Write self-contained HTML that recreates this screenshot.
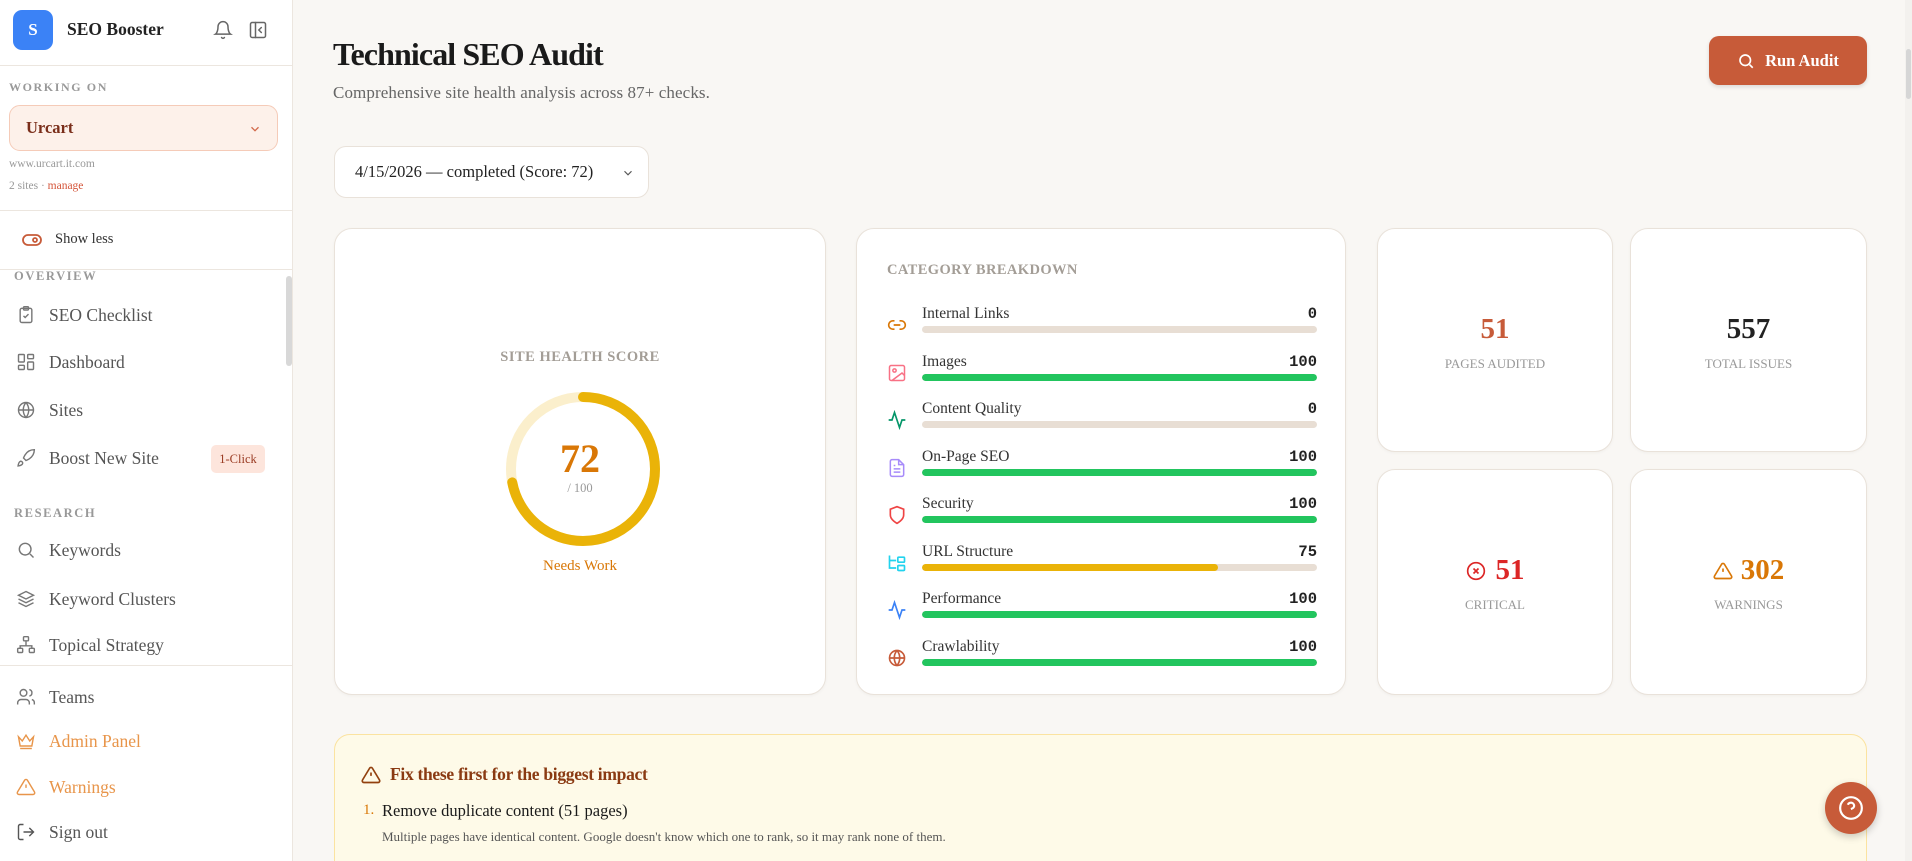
<!DOCTYPE html>
<html style="overflow:hidden;width:1912px;height:861px"><head><meta charset="utf-8">
<style>
*{box-sizing:border-box;margin:0;padding:0}
body{width:1912px;height:861px;overflow:hidden;background:#f9f7f4;font-family:"Liberation Serif",serif;position:relative;color:#222}
.a{position:absolute}
.side{left:0;top:0;width:293px;height:861px;background:#fff;border-right:1px solid #ece6df}
.hr{position:absolute;left:0;width:292px;height:1px;background:#ece6df}
.nav{position:absolute;left:0;width:292px;height:30px;display:flex;align-items:center;font-size:17.5px;color:#555}
.nav svg{position:absolute;left:16px;width:20px;height:20px}
.nav span{position:absolute;left:49px}
.sec{position:absolute;left:14px;font-size:12.5px;letter-spacing:1.6px;color:#999;font-weight:bold}
.card{position:absolute;background:#fff;border:1px solid #e9e2da;border-radius:18px;box-shadow:0 1px 3px rgba(0,0,0,.04)}
.row{position:absolute;left:30px;width:430px;height:40px}
.row .ic{position:absolute;left:0;top:8px;width:20px;height:20px}
.row .lb{position:absolute;left:35px;top:-2px;font-size:15.5px;color:#333}
.row .v{position:absolute;right:0;top:-2px;font-family:"Liberation Mono",monospace;font-size:15.5px;color:#222;font-weight:bold}
.row .bar{position:absolute;left:35px;top:19px;width:395px;height:7px;border-radius:4px;background:#e8ded4;overflow:hidden}
.row .bar i{display:block;height:100%;background:#22c55e;border-radius:4px}
.stat{text-align:center}
.stat .n{position:absolute;left:0;right:0;font-size:29px;font-weight:bold}
.stat .l{position:absolute;left:0;right:0;font-size:13px;color:#999}
</style></head><body>
<div class="a side">
  <div class="a" style="left:13px;top:10px;width:40px;height:40px;background:#3b82f6;border-radius:9px;color:#fff;font-weight:bold;font-size:17px;display:flex;align-items:center;justify-content:center">S</div>
  <div class="a" style="left:67px;top:19px;font-size:17.5px;font-weight:bold;color:#222">SEO Booster</div>
  <svg class="a" style="left:213px;top:20px" width="20" height="20" viewBox="0 0 24 24" fill="none" stroke="#666" stroke-width="1.8" stroke-linecap="round"><path d="M6 8a6 6 0 0 1 12 0c0 7 3 9 3 9H3s3-2 3-9"/><path d="M10.3 21a1.94 1.94 0 0 0 3.4 0"/></svg>
  <svg class="a" style="left:248px;top:20px" width="20" height="20" viewBox="0 0 24 24" fill="none" stroke="#666" stroke-width="1.8" stroke-linecap="round"><rect x="3" y="3" width="18" height="18" rx="2"/><path d="M9 3v18"/><path d="M16 15l-3-3 3-3"/></svg>
  <div class="hr" style="top:65px"></div>
  <div class="sec" style="left:9px;top:80px;font-size:12px">WORKING ON</div>
  <div class="a" style="left:9px;top:105px;width:269px;height:46px;background:#fdf1ea;border:1px solid #f5cbb8;border-radius:11px">
    <div class="a" style="left:16px;top:12px;font-size:16.5px;font-weight:bold;color:#7a2e1a">Urcart</div>
    <svg class="a" style="left:238px;top:16px" width="14" height="14" viewBox="0 0 24 24" fill="none" stroke="#d2694a" stroke-width="2.2"><path d="M6 9l6 6 6-6"/></svg>
  </div>
  <div class="a" style="left:9px;top:158px;font-size:11.5px;color:#999">www.urcart.it.com</div>
  <div class="a" style="left:9px;top:180px;font-size:11.5px;color:#999">2 sites · <span style="color:#d4553a">manage</span></div>
  <div class="hr" style="top:210px"></div>
  <svg class="a" style="left:22px;top:233px" width="20" height="14" viewBox="0 0 20 14" fill="none" stroke="#c75b39" stroke-width="1.8"><rect x="1" y="2" width="18" height="10" rx="5"/><circle cx="13" cy="7" r="2"/></svg>
  <div class="a" style="left:55px;top:231px;font-size:14.5px;color:#333">Show less</div>
  <div class="hr" style="top:269px"></div>
  <div class="sec" style="top:269px">OVERVIEW</div>
  <div class="a" style="left:286px;top:276px;width:6px;height:90px;background:#d8d8d8;border-radius:3px"></div>
  <div class="nav" style="top:300px"><svg viewBox="0 0 24 24" fill="none" stroke="#777" stroke-width="1.7"><rect x="5" y="4" width="14" height="17" rx="2"/><rect x="9" y="2" width="6" height="4" rx="1"/><path d="M9 13l2 2 4-4"/></svg><span>SEO Checklist</span></div>
  <div class="nav" style="top:347px"><svg viewBox="0 0 24 24" fill="none" stroke="#777" stroke-width="1.7"><rect x="3" y="3" width="7" height="9" rx="1"/><rect x="14" y="3" width="7" height="5" rx="1"/><rect x="14" y="12" width="7" height="9" rx="1"/><rect x="3" y="16" width="7" height="5" rx="1"/></svg><span>Dashboard</span></div>
  <div class="nav" style="top:395px"><svg viewBox="0 0 24 24" fill="none" stroke="#777" stroke-width="1.7"><circle cx="12" cy="12" r="9"/><path d="M3 12h18M12 3a14 14 0 0 1 0 18M12 3a14 14 0 0 0 0 18"/></svg><span>Sites</span></div>
  <div class="nav" style="top:443px"><svg viewBox="0 0 24 24" fill="none" stroke="#777" stroke-width="1.7"><path d="M4.5 16.5c-1.5 1.3-2 5-2 5s3.7-.5 5-2c.7-.8.7-2.1-.1-2.9a2.2 2.2 0 0 0-2.9-.1z"/><path d="M12 15l-3-3a22 22 0 0 1 2-3.9A12.9 12.9 0 0 1 22 2c0 2.7-.8 7.5-6 11a22.4 22.4 0 0 1-4 2z"/></svg><span>Boost New Site</span></div>
  <div class="a" style="left:211px;top:445px;width:54px;height:28px;background:#fde5dc;border-radius:5px;font-size:12.5px;color:#9a3b22;display:flex;align-items:center;justify-content:center">1-Click</div>
  <div class="sec" style="top:506px">RESEARCH</div>
  <div class="nav" style="top:535px"><svg viewBox="0 0 24 24" fill="none" stroke="#777" stroke-width="1.7"><circle cx="11" cy="11" r="7"/><path d="M21 21l-4.3-4.3"/></svg><span>Keywords</span></div>
  <div class="nav" style="top:584px"><svg viewBox="0 0 24 24" fill="none" stroke="#777" stroke-width="1.7"><path d="M12 3l9 4.5-9 4.5-9-4.5z"/><path d="M3 12l9 4.5 9-4.5M3 16.5l9 4.5 9-4.5"/></svg><span>Keyword Clusters</span></div>
  <div class="nav" style="top:630px"><svg viewBox="0 0 24 24" fill="none" stroke="#777" stroke-width="1.7"><rect x="9" y="2" width="6" height="5" rx="1"/><rect x="2" y="16" width="6" height="5" rx="1"/><rect x="16" y="16" width="6" height="5" rx="1"/><path d="M5 16v-3h14v3M12 7v6"/></svg><span>Topical Strategy</span></div>
  <div class="hr" style="top:665px"></div>
  <div class="nav" style="top:682px"><svg viewBox="0 0 24 24" fill="none" stroke="#777" stroke-width="1.7"><circle cx="9" cy="7" r="4"/><path d="M2 21v-2a4 4 0 0 1 4-4h6a4 4 0 0 1 4 4v2M16 3.1a4 4 0 0 1 0 7.8M22 21v-2a4 4 0 0 0-3-3.9"/></svg><span>Teams</span></div>
  <div class="nav" style="top:726px;color:#e8954a"><svg viewBox="0 0 24 24" fill="none" stroke="#e8954a" stroke-width="1.7"><path d="M3 7l4.5 5L12 5l4.5 7L21 7l-2 11H5z"/><path d="M5 21h14"/></svg><span>Admin Panel</span></div>
  <div class="nav" style="top:772px;color:#e8954a"><svg viewBox="0 0 24 24" fill="none" stroke="#e8954a" stroke-width="1.7"><path d="M10.3 3.9L1.8 18a2 2 0 0 0 1.7 3h17a2 2 0 0 0 1.7-3L13.7 3.9a2 2 0 0 0-3.4 0z"/><path d="M12 9v4M12 17h.01"/></svg><span>Warnings</span></div>
  <div class="nav" style="top:817px"><svg viewBox="0 0 24 24" fill="none" stroke="#555" stroke-width="1.7"><path d="M9 21H5a2 2 0 0 1-2-2V5a2 2 0 0 1 2-2h4M16 17l5-5-5-5M21 12H9"/></svg><span>Sign out</span></div>
</div>

<div class="a" style="left:333px;top:36px;font-size:32px;font-weight:bold;letter-spacing:-0.9px;color:#1a1a1a">Technical SEO Audit</div>
<div class="a" style="left:333px;top:83px;font-size:17px;color:#666;letter-spacing:0.1px">Comprehensive site health analysis across 87+ checks.</div>
<div class="a" style="left:1709px;top:36px;width:158px;height:49px;background:#c75b39;border-radius:10px;box-shadow:0 2px 4px rgba(0,0,0,.12);color:#fff;font-weight:bold;font-size:16.5px;display:flex;align-items:center;justify-content:center;gap:10px"><svg width="18" height="18" viewBox="0 0 24 24" fill="none" stroke="#fff" stroke-width="2.2"><circle cx="11" cy="11" r="7"/><path d="M21 21l-4.3-4.3"/></svg>Run Audit</div>
<div class="a" style="left:334px;top:146px;width:315px;height:52px;background:#fff;border:1px solid #e9e2da;border-radius:12px">
  <div class="a" style="left:20px;top:15px;font-size:16.5px;color:#222">4/15/2026 — completed (Score: 72)</div>
  <svg class="a" style="left:286px;top:19px" width="14" height="14" viewBox="0 0 24 24" fill="none" stroke="#555" stroke-width="2"><path d="M6 9l6 6 6-6"/></svg>
</div>

<div class="card" style="left:334px;top:228px;width:492px;height:467px">
  <div class="a" style="left:0;right:0;top:120px;text-align:center;font-size:14.5px;font-weight:bold;letter-spacing:.5px;color:#a39d96">SITE HEALTH SCORE</div>
  <svg class="a" style="left:168px;top:160px" width="160" height="160" viewBox="0 0 160 160"><circle cx="80" cy="80" r="72" fill="none" stroke="#fbefcc" stroke-width="10"/><circle cx="80" cy="80" r="72" fill="none" stroke="#eab308" stroke-width="10" stroke-linecap="round" stroke-dasharray="325.7 500" transform="rotate(-90 80 80)"/></svg>
  <div class="a" style="left:0;right:0;top:206px;text-align:center;font-size:40px;font-weight:bold;color:#d97706">72</div>
  <div class="a" style="left:0;right:0;top:252px;text-align:center;font-size:12.5px;color:#999">/ 100</div>
  <div class="a" style="left:0;right:0;top:329px;text-align:center;font-size:15px;color:#d97706">Needs Work</div>
</div>

<div class="card" style="left:856px;top:228px;width:490px;height:467px">
  <div class="a" style="left:30px;top:33px;font-size:14.5px;font-weight:bold;letter-spacing:.4px;color:#a39d96">CATEGORY BREAKDOWN</div>
  <div class="row" style="top:78px"><svg class="ic" viewBox="0 0 24 24" fill="none" stroke="#d97706" stroke-width="2"><path d="M9 17H7A5 5 0 0 1 7 7h2M15 7h2a5 5 0 1 1 0 10h-2M8 12h8"/></svg><div class="lb">Internal Links</div><div class="v">0</div><div class="bar"><i style="width:0"></i></div></div>
  <div class="row" style="top:126px"><svg class="ic" viewBox="0 0 24 24" fill="none" stroke="#f87185" stroke-width="1.8"><rect x="3" y="3" width="18" height="18" rx="2"/><circle cx="9" cy="9" r="2"/><path d="M21 15l-3-3L6 21"/></svg><div class="lb">Images</div><div class="v">100</div><div class="bar"><i style="width:100%"></i></div></div>
  <div class="row" style="top:173px"><svg class="ic" viewBox="0 0 24 24" fill="none" stroke="#059669" stroke-width="2"><path d="M22 12h-4l-3 9L9 3l-3 9H2"/></svg><div class="lb">Content Quality</div><div class="v">0</div><div class="bar"><i style="width:0"></i></div></div>
  <div class="row" style="top:221px"><svg class="ic" viewBox="0 0 24 24" fill="none" stroke="#a78bfa" stroke-width="1.8"><path d="M14 2H6a2 2 0 0 0-2 2v16a2 2 0 0 0 2 2h12a2 2 0 0 0 2-2V8z"/><path d="M14 2v6h6M16 13H8M16 17H8M10 9H8"/></svg><div class="lb">On-Page SEO</div><div class="v">100</div><div class="bar"><i style="width:100%"></i></div></div>
  <div class="row" style="top:268px"><svg class="ic" viewBox="0 0 24 24" fill="none" stroke="#ef4444" stroke-width="2"><path d="M12 22s8-4 8-10V5l-8-3-8 3v7c0 6 8 10 8 10z"/></svg><div class="lb">Security</div><div class="v">100</div><div class="bar"><i style="width:100%"></i></div></div>
  <div class="row" style="top:316px"><svg class="ic" viewBox="0 0 24 24" fill="none" stroke="#22d3ee" stroke-width="2"><path d="M3 3v15h8M3 9h8"/><rect x="13" y="5" width="8" height="6" rx="1"/><rect x="13" y="15" width="8" height="6" rx="1"/></svg><div class="lb">URL Structure</div><div class="v">75</div><div class="bar"><i style="width:75%;background:#eab308"></i></div></div>
  <div class="row" style="top:363px"><svg class="ic" viewBox="0 0 24 24" fill="none" stroke="#3b82f6" stroke-width="2"><path d="M22 12h-4l-3 9L9 3l-3 9H2"/></svg><div class="lb">Performance</div><div class="v">100</div><div class="bar"><i style="width:100%"></i></div></div>
  <div class="row" style="top:411px"><svg class="ic" viewBox="0 0 24 24" fill="none" stroke="#c75b39" stroke-width="2"><circle cx="12" cy="12" r="9"/><path d="M3 12h18M12 3a14 14 0 0 1 0 18M12 3a14 14 0 0 0 0 18"/></svg><div class="lb">Crawlability</div><div class="v">100</div><div class="bar"><i style="width:100%"></i></div></div>
</div>

<div class="card stat" style="left:1377px;top:228px;width:236px;height:224px"><div class="n" style="top:84px;color:#c75b39">51</div><div class="l" style="top:127px">PAGES AUDITED</div></div>
<div class="card stat" style="left:1630px;top:228px;width:237px;height:224px"><div class="n" style="top:84px;color:#222">557</div><div class="l" style="top:127px">TOTAL ISSUES</div></div>
<div class="card stat" style="left:1377px;top:469px;width:236px;height:226px"><div class="n" style="top:84px;color:#dc2626;display:flex;justify-content:center;align-items:center;gap:10px"><svg width="20" height="20" viewBox="0 0 24 24" fill="none" stroke="#dc2626" stroke-width="2"><circle cx="12" cy="12" r="10"/><path d="M15 9l-6 6M9 9l6 6"/></svg>51</div><div class="l" style="top:127px">CRITICAL</div></div>
<div class="card stat" style="left:1630px;top:469px;width:237px;height:226px"><div class="n" style="top:84px;color:#d97706;display:flex;justify-content:center;align-items:center;gap:8px"><svg width="20" height="20" viewBox="0 0 24 24" fill="none" stroke="#d97706" stroke-width="2"><path d="M10.3 3.9L1.8 18a2 2 0 0 0 1.7 3h17a2 2 0 0 0 1.7-3L13.7 3.9a2 2 0 0 0-3.4 0z"/><path d="M12 9v4M12 17h.01"/></svg>302</div><div class="l" style="top:127px">WARNINGS</div></div>

<div class="a" style="left:334px;top:734px;width:1533px;height:160px;background:#fefae8;border:1px solid #fbe3a0;border-radius:16px">
  <svg class="a" style="left:26px;top:30px" width="20" height="20" viewBox="0 0 24 24" fill="none" stroke="#92400e" stroke-width="2"><path d="M10.3 3.9L1.8 18a2 2 0 0 0 1.7 3h17a2 2 0 0 0 1.7-3L13.7 3.9a2 2 0 0 0-3.4 0z"/><path d="M12 9v4M12 17h.01"/></svg>
  <div class="a" style="left:55px;top:29px;font-size:17.5px;font-weight:bold;color:#8a3a12;letter-spacing:-0.3px">Fix these first for the biggest impact</div>
  <div class="a" style="left:28px;top:67px;font-size:15px;color:#d97706">1.</div>
  <div class="a" style="left:47px;top:66px;font-size:16.5px;color:#1a1a1a">Remove duplicate content (51 pages)</div>
  <div class="a" style="left:47px;top:94px;font-size:13px;color:#555">Multiple pages have identical content. Google doesn't know which one to rank, so it may rank none of them.</div>
</div>

<div class="a" style="left:1825px;top:782px;width:52px;height:52px;border-radius:50%;background:#c75b39;box-shadow:0 3px 8px rgba(0,0,0,.2);display:flex;align-items:center;justify-content:center"><svg width="26" height="26" viewBox="0 0 24 24" fill="none" stroke="#fff" stroke-width="2"><circle cx="12" cy="12" r="10"/><path d="M9.1 9a3 3 0 0 1 5.8 1c0 2-3 3-3 3M12 17h.01"/></svg></div>
<div class="a" style="left:1905px;top:0;width:7px;height:861px;background:#f3f1ee"></div>
<div class="a" style="left:1906px;top:49px;width:5px;height:50px;background:#d6d6d6;border-radius:3px"></div>
</body></html>
